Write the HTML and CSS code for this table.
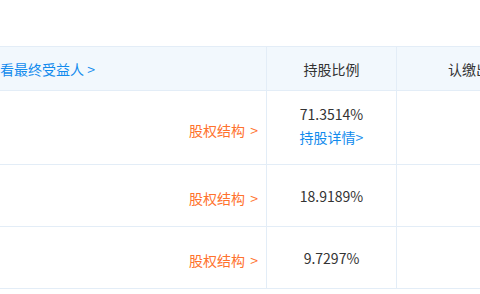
FILE: index.html
```html
<!DOCTYPE html>
<html lang="zh-CN">
<head>
<meta charset="utf-8">
<link rel="stylesheet" href="styles.css">
</head>
<body>
<div class="sheet">
  <div class="row head">
    <div class="cell c1"><a class="link">查看最终受益人 &gt;</a></div>
    <div class="cell c2">持股比例</div>
    <div class="cell c3">认缴出资额</div>
  </div>
  <div class="row r1">
    <div class="cell c1"><a class="struct">股权结构 <span class="gt">&gt;</span></a></div>
    <div class="cell c2 stack"><span>71.3514%</span><a class="link">持股详情&gt;</a></div>
    <div class="cell c3"></div>
  </div>
  <div class="row r2">
    <div class="cell c1"><a class="struct">股权结构 <span class="gt">&gt;</span></a></div>
    <div class="cell c2">18.9189%</div>
    <div class="cell c3"></div>
  </div>
  <div class="row r2">
    <div class="cell c1"><a class="struct">股权结构 <span class="gt">&gt;</span></a></div>
    <div class="cell c2">9.7297%</div>
    <div class="cell c3"></div>
  </div>
</div>
</body>
</html>
```
FILE: styles.css
```css
html, body {
  margin: 0;
  padding: 0;
  background: #fff;
  overflow: hidden;
}
body {
  width: 480px;
  height: 294px;
  font-family: "Noto Sans CJK SC", "Noto Sans", sans-serif;
  font-size: 14px;
  color: #333;
}
.sheet {
  margin-top: 46px;
  margin-left: -20px;
  width: 560px;
  border-top: 1px solid #e3edf7;
}
.row {
  display: flex;
  border-bottom: 1px solid #e3edf7;
}
.head {
  height: 43px;
  background: #f2f8fd;
}
.r1 { height: 73px; }
.r2 { height: 61px; }
.cell {
  display: flex;
  align-items: center;
  box-sizing: border-box;
}
.c1 {
  width: 287px;
  border-right: 1px solid #e3edf7;
  justify-content: flex-end;
  padding-right: 8px;
}
.head .c1 {
  justify-content: flex-start;
  padding-left: 6px;
}
.c2 {
  width: 130px;
  border-right: 1px solid #e3edf7;
  justify-content: center;
}
.c3 {
  flex: 1;
  padding-left: 51px;
}
.stack {
  flex-direction: column;
  line-height: 23px;
  padding-bottom: 4px;
}
.link {
  color: #128bed;
}
.struct {
  color: #ff722d;
  padding-top: 5px;
}
.gt {
  margin-left: 2px;
}
```
